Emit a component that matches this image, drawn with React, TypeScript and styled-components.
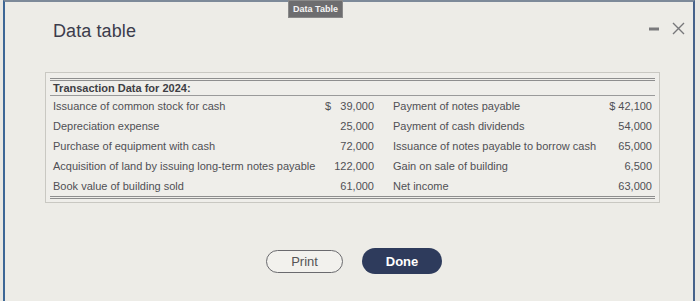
import styled, { createGlobalStyle } from 'styled-components'

const GlobalStyle = createGlobalStyle`
  html, body {
    margin: 0;
    padding: 0;
    background: #e9e8e3;
    font-family: "Liberation Sans", Arial, sans-serif;
  }
`

const Window = styled.div`
  box-sizing: border-box;
  height: 301px;
  margin-left: 3px;
  margin-right: 5px;
  background: #edece7;
  border-top: 2px solid #7d8a99;
  border-left: 2px solid #3d6796;
  border-right: 2px solid #46628a;
  display: flex;
  flex-direction: column;
`

const Header = styled.div`
  display: flex;
  align-items: flex-start;
  padding-left: 48px;
  padding-right: 8px;
  height: 66px;
`

const Title = styled.h1`
  margin: 19px 0 0;
  font-size: 18px;
  font-weight: normal;
  color: #3c3c4c;
  letter-spacing: 0.1px;
`

const Tooltip = styled.div`
  margin-left: 152px;
  margin-top: -2px;
  background: #6d6d6f;
  color: #f4f4f4;
  font-size: 9px;
  font-weight: bold;
  padding: 3px 4px 3px;
  border: 1px solid #8a8a8a;
`

const Controls = styled.div`
  margin-left: auto;
  margin-top: 20px;
  display: flex;
  align-items: center;
  gap: 13px;
`

const Panel = styled.div`
  margin: 4px 0 0 40px;
  width: 615px;
  box-sizing: border-box;
  border: 1px solid #c9c8c2;
  padding: 5px 4px 3px;
  background: #efeeea;
`

const Table = styled.table`
  width: 605px;
  border-collapse: collapse;
  table-layout: fixed;
  border-top: 3px double #8e8e8e;
  border-bottom: 3px double #8e8e8e;
  font-size: 11px;
  color: #505055;
`

const HeadCell = styled.th`
  text-align: left;
  font-weight: bold;
  color: #3e3e44;
  padding: 1px 3px 1px;
  border-bottom: 1px solid #9a9a9a;
  height: 12px;
`

const Cell = styled.td<{ $num?: boolean; $indent?: boolean }>`
  height: 20px;
  padding: 0 3px 0 ${p => (p.$indent ? '16px' : '3px')};
  text-align: ${p => (p.$num ? 'right' : 'left')};
  white-space: pre;
  vertical-align: middle;
`

const Footer = styled.div`
  display: flex;
  justify-content: center;
  align-items: center;
  gap: 19px;
  margin-top: 45px;
  padding-left: 10px;
`

const Button = styled.button<{ $primary?: boolean }>`
  font-family: "Liberation Sans", Arial, sans-serif;
  font-size: 13px;
  border-radius: 14px;
  cursor: pointer;
  height: ${p => (p.$primary ? '26px' : '23px')};
  width: ${p => (p.$primary ? '80px' : '77px')};
  background: ${p => (p.$primary ? '#2e3b5c' : '#f2f1ed')};
  color: ${p => (p.$primary ? '#ffffff' : '#555')};
  font-weight: ${p => (p.$primary ? 'bold' : 'normal')};
  border: ${p => (p.$primary ? 'none' : '1.5px solid #6a6a6e')};
`

const rows = [
  ['Issuance of common stock for cash', '$   39,000', 'Payment of notes payable', '$ 42,100'],
  ['Depreciation expense', '25,000', 'Payment of cash dividends', '54,000'],
  ['Purchase of equipment with cash', '72,000', 'Issuance of notes payable to borrow cash', '65,000'],
  ['Acquisition of land by issuing long-term notes payable', '122,000', 'Gain on sale of building', '6,500'],
  ['Book value of building sold', '61,000', 'Net income', '63,000'],
]

export default function App() {
  return (
    <>
      <GlobalStyle />
      <Window>
        <Header>
          <Title>Data table</Title>
          <Tooltip>Data Table</Tooltip>
          <Controls>
            <svg width="10" height="4" viewBox="0 0 10 4">
              <rect x="0" y="0.5" width="10" height="3" fill="#7a7a7c" />
            </svg>
            <svg width="13" height="13" viewBox="0 0 13 13">
              <path d="M1 1 L12 12 M12 1 L1 12" stroke="#77777a" strokeWidth="1.4" fill="none" />
            </svg>
          </Controls>
        </Header>
        <Panel>
          <Table>
            <colgroup>
              <col style={{ width: 265 }} />
              <col style={{ width: 62 }} />
              <col style={{ width: 218 }} />
              <col style={{ width: 60 }} />
            </colgroup>
            <thead>
              <tr>
                <HeadCell colSpan={4}>Transaction Data for 2024:</HeadCell>
              </tr>
            </thead>
            <tbody>
              {rows.map(r => (
                <tr key={r[0]}>
                  <Cell>{r[0]}</Cell>
                  <Cell $num>{r[1]}</Cell>
                  <Cell $indent>{r[2]}</Cell>
                  <Cell $num>{r[3]}</Cell>
                </tr>
              ))}
            </tbody>
          </Table>
        </Panel>
        <Footer>
          <Button>Print</Button>
          <Button $primary>Done</Button>
        </Footer>
      </Window>
    </>
  )
}
